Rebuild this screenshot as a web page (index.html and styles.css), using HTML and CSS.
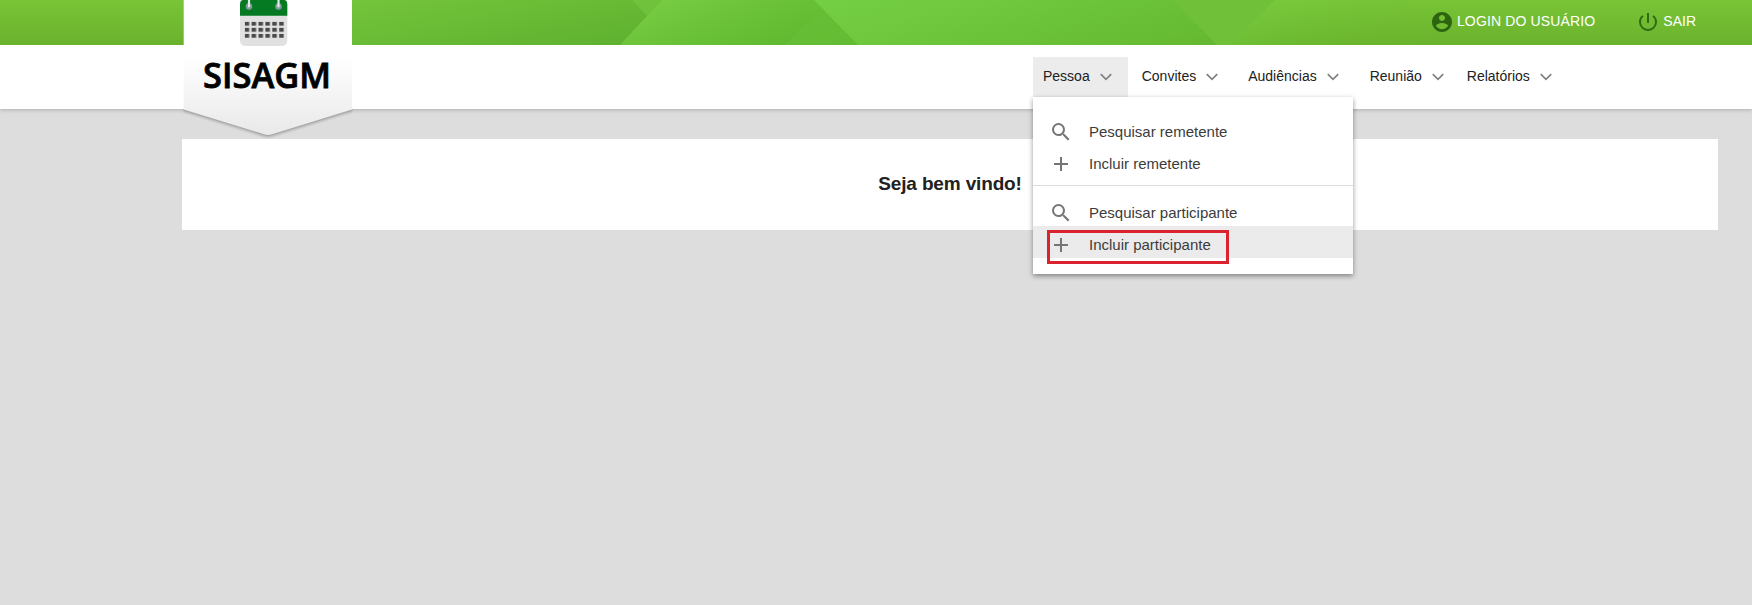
FILE: index.html
```
<!DOCTYPE html>
<html lang="pt-BR">
<head>
<meta charset="utf-8">
<title>SISAGM</title>
<link rel="stylesheet" href="styles.css">
</head>
<body>
<svg class="defs" width="0" height="0" aria-hidden="true">
  <symbol id="chevron" viewBox="0 0 12 8"><path d="M.8 1.200 6 6.400 11.200 1.200" fill="none" stroke="#808080" stroke-width="1.700"/></symbol>
  <symbol id="search" viewBox="0 0 24 24"><path fill="#757575" d="M15.5 14h-.79l-.28-.27A6.471 6.471 0 0 0 16 9.5 6.5 6.5 0 1 0 9.5 16c1.61 0 3.09-.59 4.23-1.57l.27.28v.79l5 4.99L20.49 19l-4.99-5zm-6 0C7.01 14 5 11.99 5 9.5S7.01 5 9.5 5 14 7.01 14 9.5 11.99 14 9.5 14z"/></symbol>
  <symbol id="plus" viewBox="0 0 24 24"><path fill="#757575" d="M19 13h-6v6h-2v-6H5v-2h6V5h2v6h6v2z"/></symbol>
</svg>
<header class="header">
  <div class="topbar">
    <svg class="topbar-art" viewBox="0 0 1752 45" preserveAspectRatio="none">
      <defs>
        <linearGradient id="g0" x1="0" y1="0" x2="0" y2="1"><stop offset="0" stop-color="#79c437"/><stop offset="1" stop-color="#6ab22c"/></linearGradient>
        <linearGradient id="g1" gradientUnits="userSpaceOnUse" x1="400" y1="-40" x2="440" y2="170"><stop offset="0" stop-color="#7bcb3f"/><stop offset="1" stop-color="#4a9f24"/></linearGradient>
        <linearGradient id="g2" gradientUnits="userSpaceOnUse" x1="650" y1="0" x2="690" y2="110"><stop offset="0" stop-color="#77cc43"/><stop offset="1" stop-color="#58b329"/></linearGradient>
        <linearGradient id="g3" gradientUnits="userSpaceOnUse" x1="850" y1="0" x2="900" y2="190"><stop offset="0" stop-color="#74ce43"/><stop offset=".5" stop-color="#68bf35"/><stop offset="1" stop-color="#5fae2b"/></linearGradient>
        <linearGradient id="g4" gradientUnits="userSpaceOnUse" x1="1240" y1="0" x2="1250" y2="60"><stop offset="0" stop-color="#7bcc41"/><stop offset="1" stop-color="#6bbb30"/></linearGradient>
        <linearGradient id="fadeOut" x1="0" y1="0" x2="1" y2="0"><stop offset="0" stop-color="#fff"/><stop offset="1" stop-color="#fff" stop-opacity="0"/></linearGradient>
        <mask id="m4" maskUnits="userSpaceOnUse" x="1200" y="0" width="240" height="45"><rect x="1200" width="240" height="45" fill="url(#fadeOut)"/></mask>
      </defs>
      <rect width="1752" height="45" fill="url(#g0)"/>
      <path d="M352 0H662L620 45H352Z" fill="url(#g1)"/>
      <path d="M632 0H662L647 16Z" fill="#74c440" opacity=".75"/>
      <path d="M662 0H814L858 45H620Z" fill="url(#g2)"/>
      <path d="M822 8 858 45H785Z" fill="#68bf38" opacity=".7"/>
      <path d="M814 0H1173L1217 45H858Z" fill="url(#g3)"/>
      <path d="M1173 0H1275L1230 45H1217Z" fill="#70c139"/>
      <path d="M1275 0H1440V45H1230Z" fill="url(#g4)" mask="url(#m4)"/>
    </svg>
    <div class="account">
      <a class="account-link user">
        <svg width="24" height="24" viewBox="0 0 24 24"><path fill="#2c6410" d="M12 2C6.48 2 2 6.48 2 12s4.48 10 10 10 10-4.48 10-10S17.520 2 12 2zm0 3c1.660 0 3 1.340 3 3s-1.340 3-3 3-3-1.340-3-3 1.340-3 3-3zm0 14.200c-2.500 0-4.710-1.280-6-3.220.03-1.990 4-3.080 6-3.080 1.990 0 5.970 1.090 6 3.080-1.290 1.940-3.500 3.220-6 3.220z"/></svg>
        <span>LOGIN DO USUÁRIO</span>
      </a>
      <a class="account-link">
        <svg width="24" height="24" viewBox="0 0 24 24"><path fill="#2f6912" d="M13 3h-2v10h2V3zm4.830 2.170-1.420 1.420A6.920 6.920 0 0 1 19 12c0 3.870-3.130 7-7 7s-7-3.130-7-7c0-2.190 1.010-4.140 2.580-5.420L6.170 5.170A8.932 8.932 0 0 0 3 12a9 9 0 0 0 18 0c0-2.740-1.230-5.180-3.170-6.830z"/></svg>
        <span>SAIR</span>
      </a>
    </div>
  </div>
  <nav class="nav">
    <a class="nav-item open">Pessoa<svg width="12" height="8"><use href="#chevron"/></svg></a>
    <a class="nav-item">Convites<svg width="12" height="8"><use href="#chevron"/></svg></a>
    <a class="nav-item">Audiências<svg width="12" height="8"><use href="#chevron"/></svg></a>
    <a class="nav-item meeting">Reunião<svg width="12" height="8"><use href="#chevron"/></svg></a>
    <a class="nav-item last">Relatórios<svg width="12" height="8"><use href="#chevron"/></svg></a>
  </nav>
  <svg class="logo" width="176" height="142" viewBox="180 0 176 142">
    <defs>
      <linearGradient id="flag" x1="0" y1="0" x2="0" y2="1"><stop offset=".42" stop-color="#fff"/><stop offset="1" stop-color="#e9e9e9"/></linearGradient>
      <pattern id="days" patternUnits="userSpaceOnUse" x="244.700" y="21.700" width="6.900" height="6.100"><rect width="4.500" height="4" fill="#4a4a4a"/></pattern>
    </defs>
    <path class="logo-edge" d="M183.700 109.500 264 134.200Q268 135.600 272 134.200L352 109.500"/>
    <path d="M183.700 0H352V109.500L272 134.200Q268 135.600 264 134.200L183.700 109.500Z" fill="url(#flag)"/>
    <path d="M240 0H287.300V40Q287.300 46 281.300 46H246Q240 46 240 40Z" fill="#e1e1e1"/>
    <path d="M240 4Q240 1 242.500 0H284.800Q287.300 1 287.300 4V15.700H240Z" fill="#057a22"/>
    <g fill="#7f9a99"><circle cx="249" cy="6.600" r="3.300"/><circle cx="278.500" cy="6.600" r="3.300"/></g>
    <path d="M249 0V6.500M278.500 0V6.500" stroke="#e2ebe8" stroke-width="2.200" stroke-linecap="round"/>
    <rect x="244.700" y="21.700" width="39.500" height="16.300" fill="url(#days)"/>
    <text x="203" y="87.700" textLength="128" lengthAdjust="spacingAndGlyphs" class="logo-text">SISAGM</text>
  </svg>
  <div class="dropdown">
    <a class="option"><svg width="24" height="24"><use href="#search"/></svg>Pesquisar remetente</a>
    <a class="option"><svg width="24" height="24"><use href="#plus"/></svg>Incluir remetente</a>
    <hr class="divider">
    <a class="option"><svg width="24" height="24"><use href="#search"/></svg>Pesquisar participante</a>
    <a class="option active"><svg width="24" height="24"><use href="#plus"/></svg>Incluir participante<span class="highlight"></span></a>
  </div>
</header>
<main class="content">
  <h1 class="welcome">Seja bem vindo!</h1>
</main>
</body>
</html>
```
FILE: styles.css
```
* { box-sizing: border-box; }
body {
  margin: 0;
  min-height: 605px;
  background: #ddd;
  font-family: "Liberation Sans", Arial, sans-serif;
  color: #212121;
  overflow: hidden;
}
.defs { position: absolute; }
.header { position: relative; z-index: 1; }
.topbar {
  position: relative;
  height: 45px;
  background: #72bb31;
}
.topbar-art {
  position: absolute;
  inset: 0;
  width: 100%;
  height: 100%;
}
.account {
  position: relative;
  display: flex;
  justify-content: flex-end;
  gap: 41px;
  height: 43px;
  padding-right: 56px;
}
.account-link {
  display: flex;
  align-items: center;
  gap: 3px;
  font-size: 14px;
  color: #fff;
}
.account-link span { padding-bottom: 2px; }
.account-link.user { letter-spacing: .14px; }
.nav {
  display: flex;
  gap: 4px;
  height: 64px;
  padding: 12px 0 0 1033px;
  background: #fff;
  box-shadow: 0 1px 4px rgba(0, 0, 0, .22);
}
.nav-item {
  display: flex;
  align-items: center;
  gap: 10px;
  height: 40px;
  padding: 0 16px 2px 10px;
  font-size: 14px;
  color: #212121;
}
.nav-item.open { background: #ececec; }
.nav-item.meeting { margin-left: 1px; }
.nav-item.last { margin-left: -7px; }
.nav-item svg { margin-top: 2px; }
.logo {
  position: absolute;
  left: 180px;
  top: 0;
}
.logo-edge {
  fill: none;
  stroke: #a8a8a8;
  stroke-width: 2px;
  filter: drop-shadow(0 1px 1px rgba(0, 0, 0, .25));
}
.logo-text {
  font: 600 34.5px "Open Sans", sans-serif;
  fill: #000;
  stroke: #000;
  stroke-width: .8px;
}
.dropdown {
  position: absolute;
  left: 1033px;
  top: 97px;
  width: 320px;
  height: 177px;
  padding: 16px 0;
  background: #fff;
  box-shadow: 0 2px 5px rgba(0, 0, 0, .42);
}
.option {
  position: relative;
  display: flex;
  align-items: center;
  gap: 16px;
  height: 32px;
  padding: 4px 0 0 16px;
  font-size: 15px;
  color: #3c3c3c;
}
.option svg { margin-top: 2px; }
.option.active { background: #ebebeb; }
.divider {
  height: 1px;
  margin: 8px 0;
  border: 0;
  background: #dcdcdc;
}
.highlight {
  position: absolute;
  left: 14px;
  top: 4px;
  width: 182px;
  height: 34px;
  border: 3px solid #d9232e;
}
.content {
  display: flex;
  align-items: center;
  justify-content: center;
  height: 91px;
  margin: 30px 34px 0 182px;
  padding-bottom: 2px;
  background: #fff;
}
.welcome {
  margin: 0;
  font-size: 19px;
  line-height: 22px;
  letter-spacing: -.15px;
}
```
